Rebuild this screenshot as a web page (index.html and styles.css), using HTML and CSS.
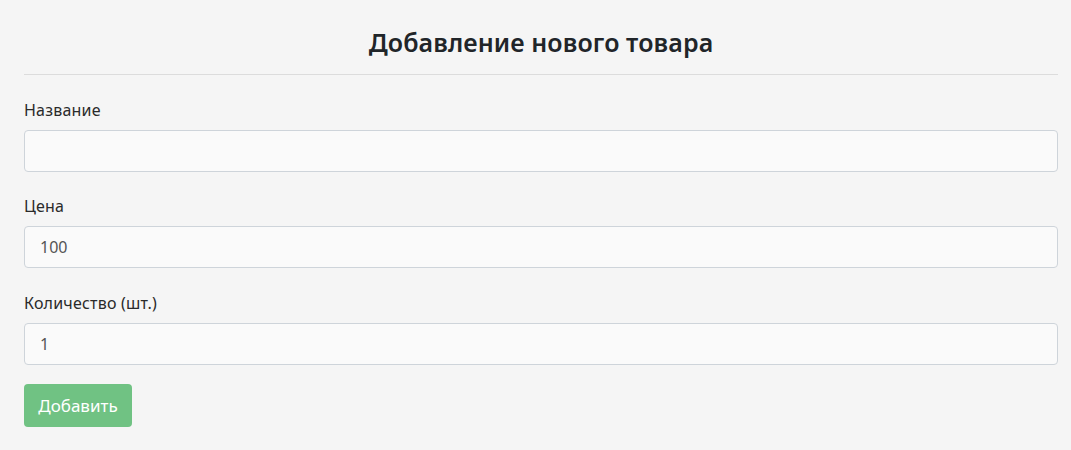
FILE: index.html
```html
<!DOCTYPE html>
<html lang="ru">
<head>
<meta charset="utf-8">
<title>Добавление нового товара</title>
<link rel="stylesheet" href="styles.css">
</head>
<body>
<div class="page">
  <h2 class="title">Добавление нового товара</h2>
  <hr class="divider">
  <form class="form">
    <div class="field">
      <label class="label" for="name">Название</label>
      <input class="control" id="name" type="text" value="">
    </div>
    <div class="field">
      <label class="label" for="price">Цена</label>
      <input class="control" id="price" type="text" value="100">
    </div>
    <div class="field field-last">
      <label class="label" for="qty">Количество (шт.)</label>
      <input class="control" id="qty" type="text" value="1">
    </div>
    <button class="btn" type="button" disabled>Добавить</button>
  </form>
</div>
</body>
</html>
```

FILE: styles.css
```css
* { box-sizing: border-box; }
html, body {
  margin: 0;
  padding: 0;
  background: #f5f5f5;
}
body {
  font-family: "Noto Sans", "Open Sans", sans-serif;
  color: #212529;
  font-size: 16px;
  line-height: 1.5;
}
.page {
  padding: 20px 13px 0 24px;
}
.title {
  margin: 0;
  text-align: center;
  font-size: 25px;
  font-weight: 600;
  line-height: 1.2;
  padding: 7px 0 17px;
  letter-spacing: 0.1px;
}
.divider {
  border: 0;
  border-top: 1px solid #dcdcdc;
  margin: 0 0 23px;
}
.form {
  display: flex;
  flex-direction: column;
}
.field {
  display: flex;
  flex-direction: column;
  margin-bottom: 22px;
}
.field-last {
  margin-top: 1px;
  margin-bottom: 19px;
}
.label {
  display: block;
  line-height: 24px;
  margin-bottom: 8px;
  color: #2a2a2a;
  letter-spacing: 0.2px;
}
.control {
  display: block;
  width: 100%;
  height: 42px;
  padding: 6px 15px;
  font-family: inherit;
  font-size: 16px;
  color: #555;
  background: #fafafa;
  border: 1px solid #ced4da;
  border-radius: 4px;
  outline: none;
}
.btn {
  align-self: flex-start;
  width: 108px;
  height: 43px;
  font-family: inherit;
  font-size: 17px;
  color: #fff;
  background: #70c283;
  border: 0;
  border-radius: 4px;
  padding: 0;
}
```
